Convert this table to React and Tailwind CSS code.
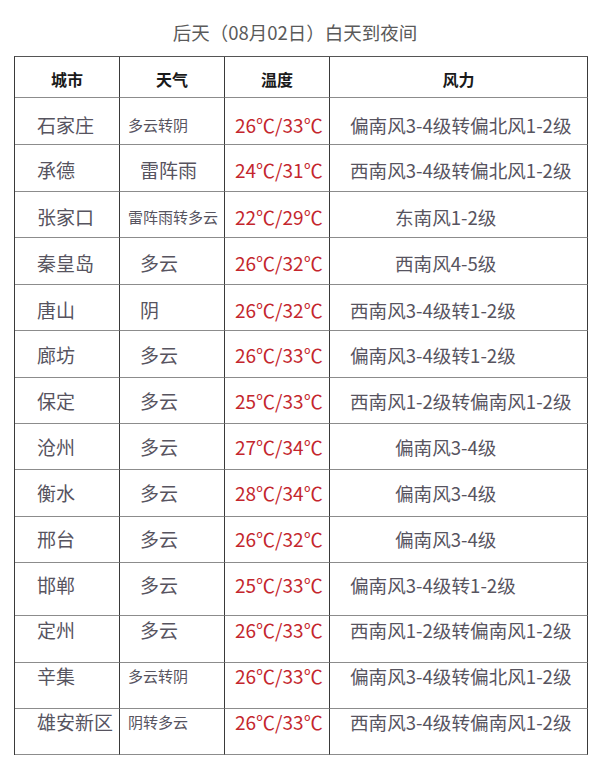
import React from 'react';

const rows = [
  { city: '石家庄', w: '多云转阴', small: true, t: '26℃/33℃', wind: '偏南风3-4级转偏北风1-2级', h: 'h-[47px]', pt: 'pt-[15px]' },
  { city: '承德', w: '雷阵雨', t: '24℃/31℃', wind: '西南风3-4级转偏北风1-2级', h: 'h-[47px]', pt: 'pt-[13px]' },
  { city: '张家口', w: '雷阵雨转多云', small: true, t: '22℃/29℃', wind: '东南风1-2级', short: true, h: 'h-[46px]', pt: 'pt-[13px]' },
  { city: '秦皇岛', w: '多云', t: '26℃/32℃', wind: '西南风4-5级', short: true, h: 'h-[47px]', pt: 'pt-[13px]' },
  { city: '唐山', w: '阴', t: '26℃/32℃', wind: '西南风3-4级转1-2级', h: 'h-[46px]', pt: 'pt-[13px]' },
  { city: '廊坊', w: '多云', t: '26℃/33℃', wind: '偏南风3-4级转1-2级', h: 'h-[47px]', pt: 'pt-[12px]' },
  { city: '保定', w: '多云', t: '25℃/33℃', wind: '西南风1-2级转偏南风1-2级', h: 'h-[46px]', pt: 'pt-[11px]' },
  { city: '沧州', w: '多云', t: '27℃/34℃', wind: '偏南风3-4级', short: true, h: 'h-[46px]', pt: 'pt-[11px]' },
  { city: '衡水', w: '多云', t: '28℃/34℃', wind: '偏南风3-4级', short: true, h: 'h-[47px]', pt: 'pt-[11px]' },
  { city: '邢台', w: '多云', t: '26℃/32℃', wind: '偏南风3-4级', short: true, h: 'h-[46px]', pt: 'pt-[10px]' },
  { city: '邯郸', w: '多云', t: '25℃/33℃', wind: '偏南风3-4级转1-2级', h: 'h-[53px]', pt: 'pt-[10px]' },
  { city: '定州', w: '多云', t: '26℃/33℃', wind: '西南风1-2级转偏南风1-2级', h: 'h-[47px]', pt: 'pt-[2px]' },
  { city: '辛集', w: '多云转阴', small: true, t: '26℃/33℃', wind: '偏南风3-4级转偏北风1-2级', h: 'h-[46px]', pt: 'pt-[1px]' },
  { city: '雄安新区', w: '阴转多云', small: true, t: '26℃/33℃', wind: '西南风3-4级转偏南风1-2级', h: 'h-[46px]', pt: 'pt-[1px]' },
];

const cell = 'border-r border-b border-r-[#3a3a3a] border-b-[#8c8c8c] whitespace-nowrap leading-[24px]';

export default function App() {
  return (
    <div className="w-[600px] h-[775px] bg-white font-['Noto_Sans_CJK_SC',sans-serif] text-[#57545f]">
      <div className="pt-[20px] pr-[10px] h-[56px] text-center text-[18.5px] leading-[24px] text-[#5a5a5a]">后天（08月02日）白天到夜间</div>
      <div className="ml-[14px] w-[574px] border-l border-t border-l-[#3a3a3a] border-t-[#555] grid grid-cols-[105px_105px_105px_258px]">
        {['城市', '天气', '温度', '风力'].map((h) => (
          <div key={h} className={`${cell} h-[41px] pt-[10px] text-center text-[16px] font-semibold text-[#1a1a1a]`}>
            {h}
          </div>
        ))}
        {rows.map((r) => (
          <React.Fragment key={r.city}>
            <div className={`${cell} ${r.h} ${r.pt} pl-[22px] text-[19px]`}>{r.city}</div>
            <div className={`${cell} ${r.h} ${r.pt} ${r.small ? 'pl-[8px] text-[15px]' : 'pl-[20px] text-[19px]'}`}>{r.w}</div>
            <div className={`${cell} ${r.h} ${r.pt} pl-[10px] text-[19px] text-[#c4262d]`}>{r.t}</div>
            <div className={`${cell} ${r.h} ${r.pt} ${r.short ? 'pl-[65px]' : 'pl-[20px]'} text-[18.6px]`}>{r.wind}</div>
          </React.Fragment>
        ))}
      </div>
    </div>
  );
}
